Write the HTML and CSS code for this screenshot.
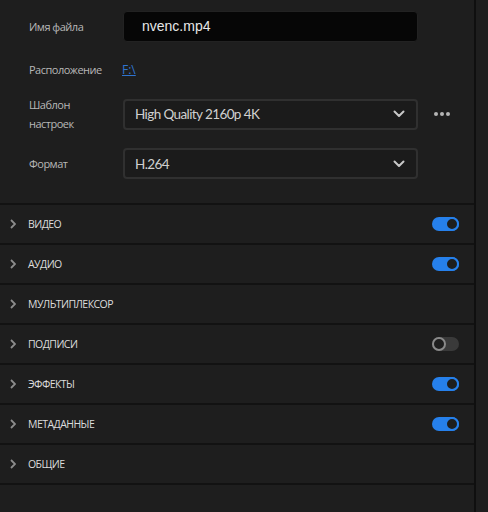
FILE: index.html
```html
<!DOCTYPE html>
<html lang="ru">
<head>
<meta charset="utf-8">
<link rel="stylesheet" href="styles.css">
</head>
<body>
<div class="panel">
  <div class="form">
    <div class="row r-name">
      <div class="label">Имя файла</div>
      <div class="input">nvenc.mp4</div>
    </div>
    <div class="row r-loc">
      <div class="label">Расположение</div>
      <a class="link">F:\</a>
    </div>
    <div class="row r-preset">
      <div class="label">Шаблон<br>настроек</div>
      <div class="select"><span>High Quality 2160p 4K</span>
        <svg class="chev" width="12" height="8" viewBox="0 0 12 8"><path d="M1.5 1.5 L6 6 L10.5 1.5" fill="none" stroke="#c8c8c8" stroke-width="2" stroke-linecap="round" stroke-linejoin="round"/></svg>
      </div>
      <div class="more"><i></i><i></i><i></i></div>
    </div>
    <div class="row r-format">
      <div class="label">Формат</div>
      <div class="select"><span>H.264</span>
        <svg class="chev" width="12" height="8" viewBox="0 0 12 8"><path d="M1.5 1.5 L6 6 L10.5 1.5" fill="none" stroke="#c8c8c8" stroke-width="2" stroke-linecap="round" stroke-linejoin="round"/></svg>
      </div>
    </div>
  </div>
  <div class="sections">
    <div class="sec"><svg class="arrow" width="6" height="10" viewBox="0 0 6 10"><path d="M1 1 L5 5 L1 9" fill="none" stroke="#8c8c8c" stroke-width="1.8"/></svg><span class="title">ВИДЕО</span><span class="toggle on"></span></div>
    <div class="sec"><svg class="arrow" width="6" height="10" viewBox="0 0 6 10"><path d="M1 1 L5 5 L1 9" fill="none" stroke="#8c8c8c" stroke-width="1.8"/></svg><span class="title">АУДИО</span><span class="toggle on"></span></div>
    <div class="sec"><svg class="arrow" width="6" height="10" viewBox="0 0 6 10"><path d="M1 1 L5 5 L1 9" fill="none" stroke="#8c8c8c" stroke-width="1.8"/></svg><span class="title">МУЛЬТИПЛЕКСОР</span></div>
    <div class="sec"><svg class="arrow" width="6" height="10" viewBox="0 0 6 10"><path d="M1 1 L5 5 L1 9" fill="none" stroke="#8c8c8c" stroke-width="1.8"/></svg><span class="title">ПОДПИСИ</span><span class="toggle off"></span></div>
    <div class="sec"><svg class="arrow" width="6" height="10" viewBox="0 0 6 10"><path d="M1 1 L5 5 L1 9" fill="none" stroke="#8c8c8c" stroke-width="1.8"/></svg><span class="title">ЭФФЕКТЫ</span><span class="toggle on"></span></div>
    <div class="sec"><svg class="arrow" width="6" height="10" viewBox="0 0 6 10"><path d="M1 1 L5 5 L1 9" fill="none" stroke="#8c8c8c" stroke-width="1.8"/></svg><span class="title">МЕТАДАННЫЕ</span><span class="toggle on"></span></div>
    <div class="sec"><svg class="arrow" width="6" height="10" viewBox="0 0 6 10"><path d="M1 1 L5 5 L1 9" fill="none" stroke="#8c8c8c" stroke-width="1.8"/></svg><span class="title">ОБЩИЕ</span></div>
  </div>
</div>
</body>
</html>
```

FILE: styles.css
```css
html, body {
  margin: 0;
  padding: 0;
  background: #1e1e1e;
  width: 488px;
  height: 512px;
  overflow: hidden;
}
body {
  font-family: "Open Sans", "Noto Sans", sans-serif;
  color: #bdbdbd;
}
.panel {
  width: 474px;
  height: 512px;
  border-right: 2px solid #0f0f0f;
  background: #1e1e1e;
}
.form {
  padding: 11px 0 24px 29px;
  border-bottom: 2px solid #121212;
}
.row {
  display: grid;
  grid-template-columns: 94px 295px auto;
  align-items: center;
}
.label {
  font-size: 11px;
  line-height: 19px;
  color: #b8b8b8;
  letter-spacing: -0.5px;
}
.input {
  height: 31px;
  box-sizing: border-box;
  background: #060606;
  border: 1px solid #222;
  border-radius: 4px;
  padding-left: 18px;
  font-family: "Liberation Sans", Arial, sans-serif;
  font-size: 14px;
  line-height: 29px;
  color: #e6e6e6;
}
.r-loc {
  height: 32px;
  margin-top: 11px;
}
.link {
  font-size: 12px;
  color: #2f74cf;
  text-decoration: underline;
  margin-left: -1px;
}
.r-preset {
  margin-top: 10px;
}
.r-format {
  margin-top: 15px;
}
.select {
  height: 31px;
  box-sizing: border-box;
  background: #1b1b1b;
  border: 2px solid #303030;
  border-radius: 4px;
  padding: 0 11px 0 10px;
  display: flex;
  align-items: center;
  justify-content: space-between;
  font-family: "Lato", "Open Sans", sans-serif;
  font-size: 13.5px;
  letter-spacing: -0.6px;
  color: #d0d0d0;
}
.more {
  display: flex;
  gap: 2px;
  margin-left: 16px;
}
.more i {
  width: 4px;
  height: 4px;
  border-radius: 50%;
  background: #b5b5b5;
}
.sec {
  height: 38px;
  border-bottom: 2px solid #121212;
  display: flex;
  align-items: center;
  padding: 0 15px 0 10px;
}
.arrow {
  margin-right: 12px;
}
.title {
  flex: 1;
  font-size: 10.5px;
  color: #dcdcdc;
  letter-spacing: -0.55px;
}
.toggle {
  width: 27px;
  height: 14px;
  border-radius: 7px;
  position: relative;
  box-sizing: border-box;
}
.toggle::after {
  content: "";
  position: absolute;
  top: 0;
  width: 14px;
  height: 14px;
  box-sizing: border-box;
  border-radius: 50%;
  background: #1e1e1e;
}
.toggle.on {
  background: #2680eb;
}
.toggle.on::after {
  right: 0;
  border: 2px solid #2680eb;
}
.toggle.off {
  background: #3a3a3a;
}
.toggle.off::after {
  left: 0;
  border: 2px solid #8a8a8a;
}
```
